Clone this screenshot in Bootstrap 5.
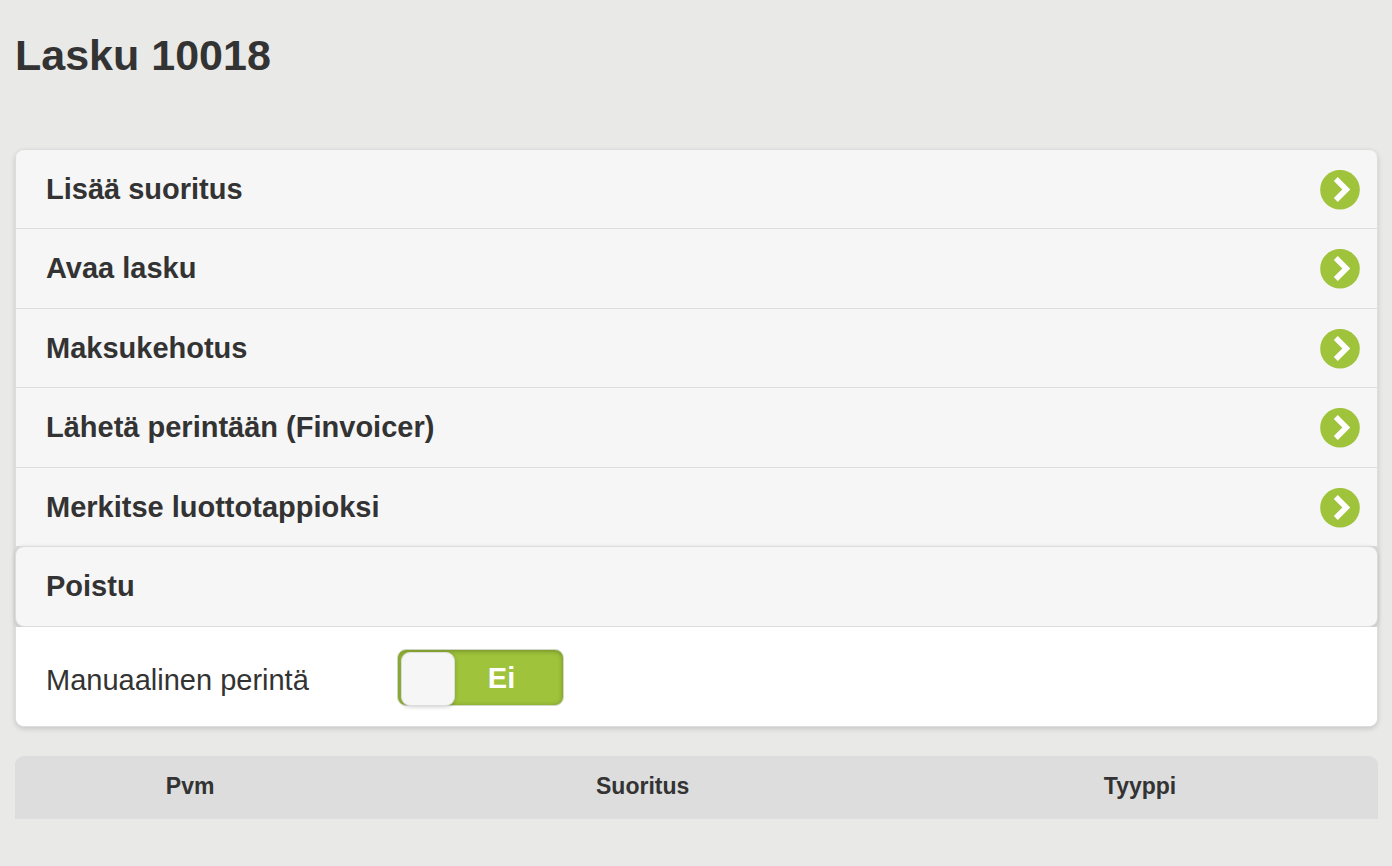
<!DOCTYPE html>
<html lang="fi">
<head>
<meta charset="utf-8">
<meta name="viewport" content="width=device-width, initial-scale=1">
<title>Lasku 10018</title>
<link rel="stylesheet" href="https://cdn.jsdelivr.net/npm/bootstrap@5.3.0/dist/css/bootstrap.min.css">
<style>
body { background: #e9e9e7; color: #333; font-family: "Liberation Sans", Arial, sans-serif; font-size: 29px; line-height: 38px; }
.page { padding: 30px 14px 40px 15px; }
.page-title { font-size: 43px; line-height: 50px; font-weight: 700; margin: 0 0 69px; }
.panel { background: #fff; border: 1px solid #ddd; border-radius: 9px; box-shadow: 0 2px 5px rgba(0,0,0,.15); }
.actions { background: #ddd; border-radius: 8px 8px 0 0; }
.action { min-height: 79px; background: #f6f6f6; color: #333; font-weight: 700; text-decoration: none; border-bottom: 1px solid #ddd; padding: 20px 17px 18px 30px; }
.action:nth-child(even) { min-height: 80px; }
.action:first-child { border-radius: 8px 8px 0 0; }
.action svg { flex: none; width: 40px; height: 40px; margin-bottom: -2px; }
.action.exit { min-height: 81px; margin: -1px -1px 0; border: 1px solid #ddd; border-radius: 9px; box-shadow: 0 1px 4px rgba(0,0,0,.15); }
.option-row { background: #fff; border-radius: 0 0 8px 8px; padding: 22px 30px 20px; }
.option-label { width: 351px; padding-top: 5px; }
.flip { position: relative; width: 167px; height: 57px; background: #9fc33b; border: 1px solid #d3d8c6; border-radius: 9px; box-shadow: inset 0 1px 5px rgba(0,0,0,.3); color: #fff; font-weight: 700; }
.flip input { appearance: none; position: absolute; left: 3px; top: 2px; width: 54px; height: 54px; margin: 0; background: #f6f6f6; border: 1px solid #ddd; border-radius: 9px; box-shadow: 0 1px 4px rgba(0,0,0,.2); }
.flip input:checked { left: 107px; }
.flip span { padding-left: 42px; }
.payments { table-layout: fixed; margin-top: 29px; border-collapse: separate; border-spacing: 0; font-size: 23px; line-height: 30px; }
.payments th { background: #ddd; padding: 15px 8px 18px; }
.payments th:first-child { border-top-left-radius: 9px; }
.payments th:last-child { border-top-right-radius: 9px; padding-right: 26px; }
.col-date { width: 25.7%; }
.col-payment { width: 40.7%; }
</style>
</head>
<body>
<svg class="d-none" aria-hidden="true"><symbol id="arrow" viewBox="0 0 40 40"><circle cx="20" cy="19.700" r="19.800" fill="#9fc33b"/><path d="M15.800 9 26.300 19.500 15.800 30" fill="none" stroke="#fff" stroke-width="5.600"/></symbol></svg>
<main class="page container-fluid">
<h1 class="page-title">Lasku 10018</h1>
<section class="panel">
<nav class="actions">
<a class="action d-flex justify-content-between align-items-start" href="#">Lisää suoritus<svg aria-hidden="true"><use href="#arrow"/></svg></a>
<a class="action d-flex justify-content-between align-items-start" href="#">Avaa lasku<svg aria-hidden="true"><use href="#arrow"/></svg></a>
<a class="action d-flex justify-content-between align-items-start" href="#">Maksukehotus<svg aria-hidden="true"><use href="#arrow"/></svg></a>
<a class="action d-flex justify-content-between align-items-start" href="#">Lähetä perintään (Finvoicer)<svg aria-hidden="true"><use href="#arrow"/></svg></a>
<a class="action d-flex justify-content-between align-items-start" href="#">Merkitse luottotappioksi<svg aria-hidden="true"><use href="#arrow"/></svg></a>
<a class="action exit d-block" href="#">Poistu</a>
</nav>
<div class="option-row d-flex flex-wrap align-items-center">
<label class="option-label" for="manual">Manuaalinen perintä</label>
<div class="flip d-flex align-items-center justify-content-center"><input id="manual" type="checkbox" role="switch"><span>Ei</span></div>
</div>
</section>
<table class="payments w-100 text-center">
<colgroup><col class="col-date"><col class="col-payment"><col></colgroup>
<thead><tr><th scope="col">Pvm</th><th scope="col">Suoritus</th><th scope="col">Tyyppi</th></tr></thead>
</table>
</main>
<script src="https://cdn.jsdelivr.net/npm/bootstrap@5.3.0/dist/js/bootstrap.bundle.min.js"></script>
</body>
</html>
